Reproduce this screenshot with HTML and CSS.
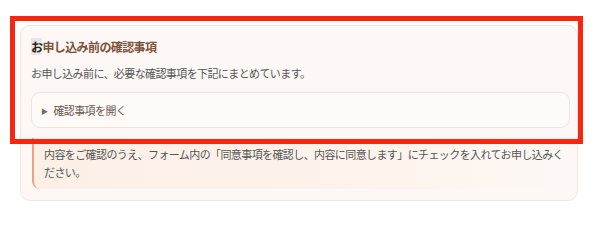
FILE: index.html
```html
<!DOCTYPE html>
<html lang="ja">

<head>
    <meta charset="UTF-8">
    <meta name="viewport" content="width=device-width, initial-scale=1.0">
    <title>お申し込み前の確認事項</title>
    <link rel="stylesheet" href="styles.css">
</head>

<body>
    <div class="page">
        <div class="card">
            <h2 class="card-title"><span class="caret">お</span>申し込み前の確認事項</h2>
            <p class="card-lead">お申し込み前に、必要な確認事項を下記にまとめています。</p>
            <details class="check-box">
                <summary>確認事項を開く</summary>
            </details>
            <div class="note">
                内容をご確認のうえ、フォーム内の「同意事項を確認し、内容に同意します」にチェックを入れてお申し込みください。
            </div>
        </div>
        <div class="highlight"></div>
    </div>
</body>

</html>
```

FILE: styles.css
```css
body {
    margin: 0;
    font-family: "Noto Sans CJK JP", "Noto Sans", sans-serif;
    background-color: #fff;
}

.page {
    position: relative;
    padding: 25px 22px 0 20px;
}

.card {
    border: 1px solid #f1e7e1;
    border-radius: 10px;
    background-color: #fdf8f5;
    padding: 11px 7px 11px 10px;
}

.card-title {
    margin: 0;
    font-size: 12px;
    letter-spacing: -0.6px;
    line-height: 20px;
    font-weight: bold;
    color: #7d5039;
}

.caret {
    color: #222;
    background-color: #e9e6e4;
}

.card-lead {
    margin: 6px 0 0;
    font-size: 11px;
    letter-spacing: -0.6px;
    line-height: 20px;
    color: #555;
}

.check-box {
    margin-top: 9px;
    border: 1px solid #efe6e0;
    border-radius: 9px;
    background-color: #fdfaf8;
}

.check-box summary {
    list-style: none;
    padding: 0 9px;
    height: 34px;
    line-height: 34px;
    font-size: 11px;
    letter-spacing: -0.6px;
    color: #6b5a52;
    cursor: pointer;
}

.check-box summary::before {
    content: "\25B6";
    display: inline-block;
    font-size: 7px;
    margin-right: 6px;
    vertical-align: 1px;
    color: #7a6a62;
}

.note {
    margin: 10px 0 0 1px;
    padding: 7px 4px 8px 10px;
    border-left: 2px solid #e8a57f;
    border-radius: 0 0 0 8px;
    background: linear-gradient(90deg, #fcefe6 0%, #fdf3ec 60%, #fdf8f5 100%);
    font-size: 11px;
    letter-spacing: -0.6px;
    line-height: 18px;
    color: #555;
}

.highlight {
    position: absolute;
    left: 10px;
    top: 16px;
    width: 563px;
    height: 118px;
    border: 5px solid #f8260f;
}
```
